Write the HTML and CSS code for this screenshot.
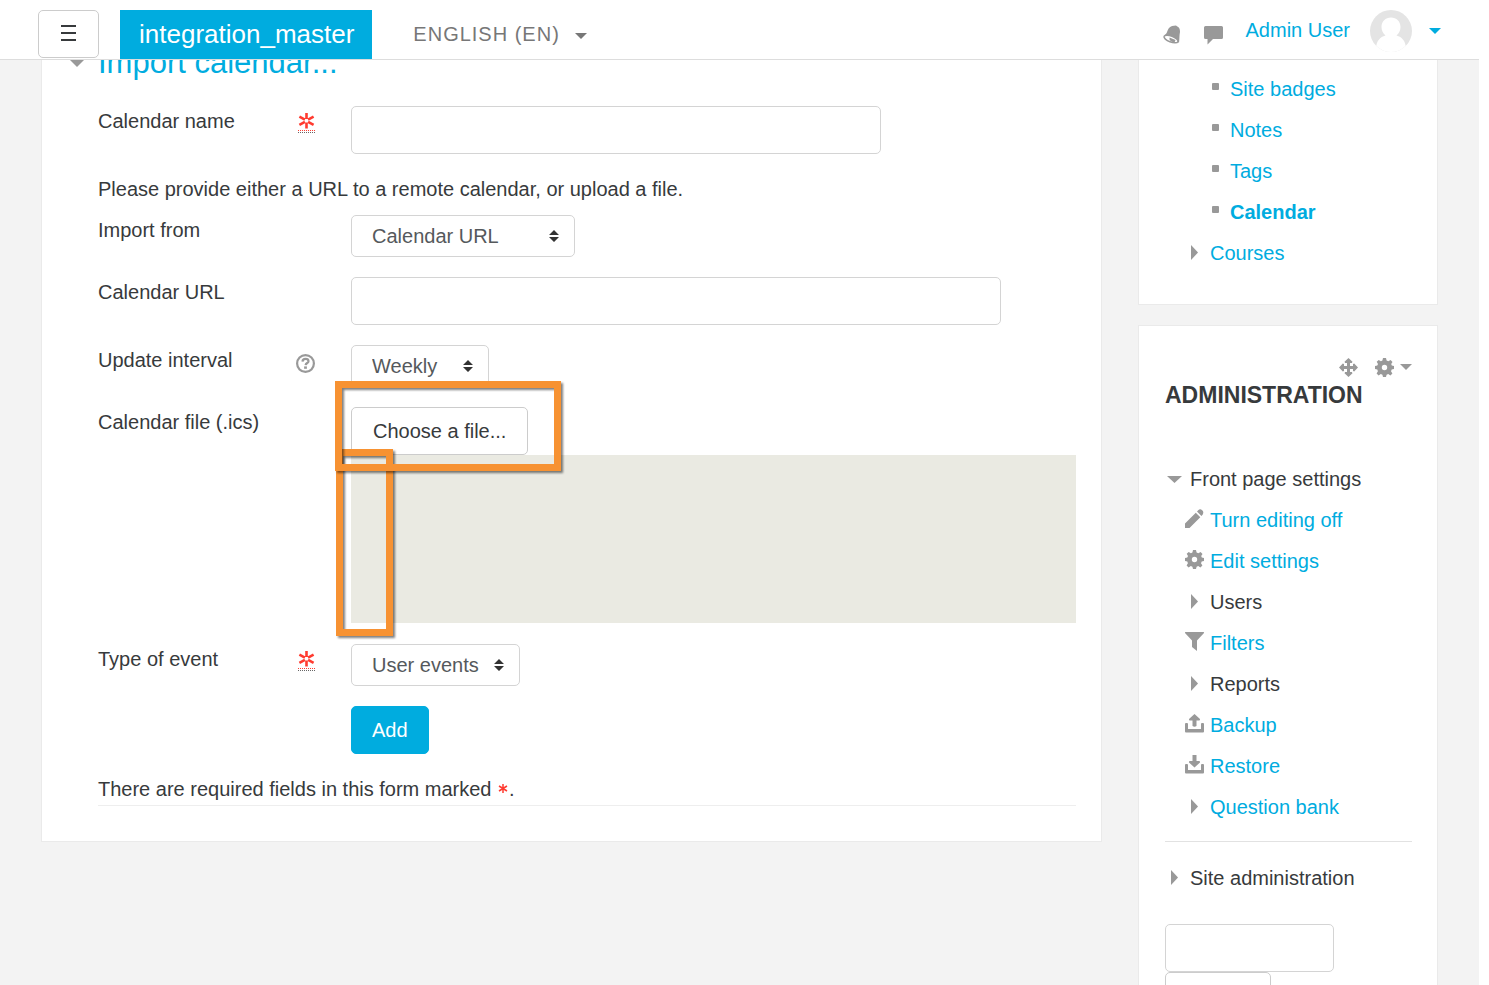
FILE: index.html
```html
<!DOCTYPE html>
<html lang="en">
<head>
    <meta charset="UTF-8">
    <meta name="viewport" content="width=device-width, initial-scale=1.0">
    <title>Import calendar</title>
    <link rel="stylesheet" href="styles.css">
</head>
<body>
    <!-- shared icons -->
    <svg class="sprite" aria-hidden="true">
        <symbol id="i-cog" viewBox="0 0 20 20">
            <path fill-rule="evenodd" d="M8 0h3l.6 2.500 1.700.8L15.600 2l1.900 1.900-1.300 2.200.6 1.500L19 8v3l-2.300.6-.7 1.600 1.400 2.200-2 2-2.200-1.300-1.600.6L11 19H8l-.6-2.300-1.600-.7-2.200 1.400-2-2 1.300-2.200-.6-1.600L0 11V8l2.300-.5.7-1.500-1.300-2.200 2-1.900 2.200 1.400 1.500-.7zM9.500 6.800a2.700 2.700 0 1 0 0 5.400 2.700 2.700 0 0 0 0-5.400z"/>
        </symbol>
        <symbol id="i-required" viewBox="0 0 17 17">
            <g stroke="currentColor" stroke-width="2.600">
                <path d="M8.500 0v6M8.500 9.500v6M1.400 3.700l5.500 3M10.100 8.800l5.500 3M15.600 3.700l-5.500 3M6.900 8.800l-5.500 3"/>
            </g>
        </symbol>
        <symbol id="i-square" viewBox="0 0 20 20"><rect x="7" y="5" width="7" height="7" rx="1"/></symbol>
        <symbol id="i-right" viewBox="0 0 20 20"><path d="M6 3v15l7-7.500z"/></symbol>
        <symbol id="i-down" viewBox="0 0 20 20"><path d="M2 8h15l-7.500 7z"/></symbol>
    </svg>

    <header class="navbar">
        <button class="btn menu-btn" type="button" aria-label="Side panel">
            <svg width="15" height="16" viewBox="0 0 15 16"><path d="M0 0h15v2H0zM0 7h15v2H0zM0 14h15v2H0z"/></svg>
        </button>
        <a class="brand" href="#">integration_master</a>
        <a class="lang" href="#">ENGLISH (EN)<span class="caret"></span></a>
        <div class="usernav">
            <button class="icon-btn" type="button" aria-label="Notifications">
                <svg width="20" height="20" viewBox="0 0 20 20">
                    <path d="M7 3C9 1 11 .6 14 .5l1 .8c2.500 1 3 3 3 5.700-.8 4-.3 6-1 11C14 14 8 11 2 10.500 6 8 4.800 5.500 7 3z"/>
                    <ellipse cx="9" cy="14" rx="7.400" ry="3" transform="rotate(21 9 14)" fill="#fff" stroke="#999" stroke-width="1.500"/>
                    <path d="M7.500 12.500l6 2.600-.8 2c-2.300.2-4.700-1-5.200-2.600z"/>
                </svg>
            </button>
            <button class="icon-btn" type="button" aria-label="Messages">
                <svg width="20" height="20" viewBox="0 0 20 20"><path d="M1.500 1h16q1.500 0 1.500 1.500v10q0 1.500-1.500 1.500H9L3.500 19.500V14h-2Q0 14 0 12.500v-10Q0 1 1.500 1z"/></svg>
            </button>
            <a class="user" href="#">
                <span>Admin User</span>
                <svg class="avatar" width="42" height="42" viewBox="0 0 42 42">
                    <defs><clipPath id="face"><circle cx="21" cy="21" r="21"/></clipPath></defs>
                    <g clip-path="url(#face)">
                        <path fill="#e4e4e4" d="M0 0h42v42H0z"/>
                        <path fill="#fff" d="M21 7.500c5.500 0 9.500 4 9.500 9.500 0 3.500-1.500 6.500-4 8.500C32 27 35.500 31 36 38v4H6v-4c.5-7 4-11 9.500-12.500-2.500-2-4-5-4-8.500 0-5.500 4-9.500 9.500-9.500z"/>
                    </g>
                </svg>
                <span class="caret"></span>
            </a>
        </div>
    </header>

    <div class="page">
        <main class="card main-card">
            <form class="mform">
                <h2 class="legend"><span class="twisty"></span><a href="#">Import calendar...</a></h2>

                <div class="row">
                    <div class="row-label">
                        <label for="name">Calendar name</label>
                        <abbr class="req" title="Required"><svg width="17" height="17"><use href="#i-required"/></svg></abbr>
                    </div>
                    <div class="row-field"><input class="text text-md" id="name" type="text"></div>
                </div>

                <p class="static">Please provide either a URL to a remote calendar, or upload a file.</p>

                <div class="row">
                    <div class="row-label"><label for="importfrom">Import from</label></div>
                    <div class="row-field">
                        <select id="importfrom">
                            <option>Calendar file (.ics)</option>
                            <option selected>Calendar URL</option>
                        </select>
                    </div>
                </div>

                <div class="row">
                    <div class="row-label"><label for="url">Calendar URL</label></div>
                    <div class="row-field"><input class="text text-lg" id="url" type="text"></div>
                </div>

                <div class="row">
                    <div class="row-label">
                        <label for="interval">Update interval</label>
                        <button class="help" type="button" aria-label="Help">
                            <svg width="19" height="19" viewBox="0 0 19 19">
                                <circle cx="9.500" cy="9.500" r="8.400" stroke-width="2.200"/>
                                <path d="M6.500 7.600c.1-1.800 1.300-2.700 3-2.700s3 .9 3 2.300c0 1.900-2.600 1.700-2.900 3.900" stroke-width="2.200"/>
                                <path d="M9.500 12.400v2.400" stroke-width="2.800"/>
                            </svg>
                        </button>
                    </div>
                    <div class="row-field">
                        <select id="interval">
                            <option>Never</option>
                            <option>Hourly</option>
                            <option>Daily</option>
                            <option selected>Weekly</option>
                            <option>Monthly</option>
                        </select>
                    </div>
                </div>

                <div class="row">
                    <div class="row-label"><label for="choose">Calendar file (.ics)</label></div>
                    <div class="row-field file-field">
                        <button class="btn" id="choose" type="button">Choose a file...</button>
                        <div class="dropzone"></div>
                        <div class="mark mark-zone"></div>
                        <div class="mark mark-button"></div>
                    </div>
                </div>

                <div class="row">
                    <div class="row-label">
                        <label for="eventtype">Type of event</label>
                        <abbr class="req" title="Required"><svg width="17" height="17"><use href="#i-required"/></svg></abbr>
                    </div>
                    <div class="row-field">
                        <select id="eventtype"><option>User events</option></select>
                    </div>
                </div>

                <div class="row">
                    <div class="row-label"></div>
                    <div class="row-field"><button class="btn btn-primary" type="submit">Add</button></div>
                </div>

                <p class="note">There are required fields in this form marked <svg class="star" width="12" height="12" viewBox="0 0 12 12"><path d="M6 0v9M2 2l8 5M10 2L2 7"/></svg>.</p>
            </form>
        </main>

        <aside class="side">
            <nav class="card nav-card">
                <ul class="tree">
                    <li>
                        <ul>
                            <li>
                                <ul>
                                    <li><svg class="icon"><use href="#i-square"/></svg><a href="#">Site badges</a></li>
                                    <li><svg class="icon"><use href="#i-square"/></svg><a href="#">Notes</a></li>
                                    <li><svg class="icon"><use href="#i-square"/></svg><a href="#">Tags</a></li>
                                    <li><svg class="icon"><use href="#i-square"/></svg><a class="active" href="#">Calendar</a></li>
                                </ul>
                            </li>
                            <li><svg class="icon"><use href="#i-right"/></svg><a href="#">Courses</a></li>
                        </ul>
                    </li>
                </ul>
            </nav>

            <section class="card admin-card">
                <div class="block-tools">
                    <button class="icon-btn" type="button" aria-label="Move block">
                        <svg width="20" height="20" viewBox="0 0 20 20"><path d="M9.500 1l4 3.800-.6 1.200H11v3h3V7.100l1.200-.6 3.800 4-3.800 4-1.200-.6V12h-3v3h1.900l.6 1.200-4 3.800-4-3.800.6-1.200H8v-3H5v1.900l-1.200.6-3.800-4 3.800-4 1.200.6V9h3V6H6.100l-.6-1.200z"/></svg>
                    </button>
                    <button class="icon-btn" type="button" aria-label="Block actions">
                        <svg width="20" height="20"><use href="#i-cog" y="1"/></svg><span class="caret"></span>
                    </button>
                </div>
                <h3>ADMINISTRATION</h3>
                <ul class="tree">
                    <li><svg class="icon"><use href="#i-down"/></svg><span>Front page settings</span>
                        <ul>
                            <li><svg class="icon" viewBox="0 0 20 20"><path d="M0 14.500L10.800 3.700l4.500 4.500L4.500 19H0zM12 2.500l1.200-1.300q2-1.700 4 .1t.4 4.400l-1.200 1.300z"/></svg><a href="#">Turn editing off</a></li>
                            <li><svg class="icon"><use href="#i-cog"/></svg><a href="#">Edit settings</a></li>
                            <li><svg class="icon"><use href="#i-right"/></svg><span>Users</span></li>
                            <li><svg class="icon" viewBox="0 0 20 20"><path d="M.5 0h18q.8 0 .5 1L12 8.500V19l-5-4V8.500L0 1q-.3-1 .5-1z"/></svg><a href="#">Filters</a></li>
                            <li><svg class="icon"><use href="#i-right"/></svg><span>Reports</span></li>
                            <li><svg class="icon" viewBox="0 0 20 20"><path d="M1 9h1q1 0 1 1v5h13v-5q0-1 1-1h1q1 0 1 1v7.500q0 1-1 1H1q-1 0-1-1V10q0-1 1-1zM9.500 0L15 5q.3 1.500-1 1.500h-2.500v5.500q-2 1.500-4 0V6.500H5Q3.700 6.500 4 5z"/></svg><a href="#">Backup</a></li>
                            <li><svg class="icon" viewBox="0 0 20 20"><path d="M1 9h1q1 0 1 1v5h13v-5q0-1 1-1h1q1 0 1 1v7.500q0 1-1 1H1q-1 0-1-1V10q0-1 1-1zM9.500 12.500L4 7.500Q3.700 6 5 6h2.500V0h4v6H14q1.300 0 1 1.500z"/></svg><a href="#">Restore</a></li>
                            <li><svg class="icon"><use href="#i-right"/></svg><a href="#">Question bank</a></li>
                        </ul>
                    </li>
                </ul>
                <hr>
                <ul class="tree">
                    <li><svg class="icon"><use href="#i-right"/></svg><span>Site administration</span></li>
                </ul>
                <form class="search">
                    <input class="text" type="text" aria-label="Search in settings">
                    <button class="btn" type="submit" aria-label="Search"></button>
                </form>
            </section>
        </aside>
    </div>
</body>
</html>
```
FILE: styles.css
```css
* {
    box-sizing: border-box;
}
html {
    background-color: #fff;
}
body {
    font-family: "Liberation Sans", Arial, sans-serif;
    font-size: 20px;
    line-height: 30px;
    color: #373a3c;
    height: 100vh;
    margin: 0 10px 0 0;
    padding-top: 40px;
    overflow: hidden;
    background-color: #f3f3f3;
}
a {
    color: #00acdf;
    text-decoration: none;
}
button, input, select {
    font: inherit;
    color: inherit;
}
button {
    cursor: pointer;
}
.sprite {
    display: none;
}
svg {
    fill: currentColor;
    flex-shrink: 0;
}

/* top bar */
.navbar {
    position: fixed;
    top: 0;
    left: 0;
    right: 10px;
    z-index: 10;
    height: 60px;
    padding: 10px 38px 0;
    display: flex;
    align-items: flex-start;
    background-color: #fff;
    border-bottom: 1px solid #ddd;
}
.btn {
    height: 48px;
    padding: 0 21px;
    background-color: #fff;
    border: 1px solid #ccc;
    border-radius: 5px;
}
.menu-btn {
    width: 61px;
    padding: 0;
}
.brand {
    margin-left: 21px;
    padding: 0 18px 0 19px;
    line-height: 49px;
    font-size: 26px;
    color: #fff;
    background-color: #00acdf;
}
.lang {
    margin-left: 41px;
    line-height: 49px;
    letter-spacing: 1px;
    color: #777;
}
.caret {
    display: inline-block;
    border: 6px solid transparent;
    border-top-color: currentColor;
    border-bottom: 0;
    vertical-align: middle;
}
.lang .caret {
    margin-left: 15px;
}
.usernav {
    display: flex;
    align-items: center;
    margin-left: auto;
    height: 42px;
}
.icon-btn {
    display: flex;
    align-items: center;
    padding: 0;
    border: 0;
    background: none;
    color: #999;
}
.usernav .icon-btn {
    margin-right: 22px;
    padding-top: 8px;
}
.user {
    display: flex;
    align-items: center;
    line-height: 28px;
}
.user span:first-child {
    padding-bottom: 2px;
}
.avatar {
    margin: 0 17px 0 20px;
}

/* columns */
.page {
    display: grid;
    grid-template-columns: minmax(0, 1fr) 300px;
    gap: 36px;
    align-items: start;
    padding: 0 41px;
}
.card {
    background-color: #fff;
    border: 1px solid #eaeaea;
}
.main-card {
    padding: 0 25px 35px;
}

/* form */
.mform {
    padding-left: 31px;
}
.legend {
    position: relative;
    margin: 0 0 22px;
    font-size: 31px;
    line-height: 43px;
    font-weight: normal;
}
.twisty {
    position: absolute;
    left: -28px;
    top: 19px;
    border: 7px solid transparent;
    border-top-color: #999;
    border-bottom: 0;
}
.row {
    display: grid;
    grid-template-columns: 253px minmax(0, 1fr);
    margin-bottom: 20px;
}
.row-label {
    display: flex;
    justify-content: space-between;
    align-items: flex-start;
    padding-right: 36px;
}
.row-field {
    display: flex;
    align-items: flex-start;
}
.text {
    height: 48px;
    padding: 0 20px;
    border: 1px solid #d4d4d4;
    border-radius: 5px;
    background-color: #fff;
}
.text-md {
    width: 530px;
}
.text-lg {
    width: 650px;
}
select {
    appearance: none;
    min-width: 138px;
    height: 42px;
    padding: 0 40px 0 20px;
    color: #55595c;
    border: 1px solid #d4d4d4;
    border-radius: 5px;
    background: #fff url("data:image/svg+xml,%3Csvg xmlns='http://www.w3.org/2000/svg' width='10' height='12' viewBox='0 0 10 12'%3E%3Cpath fill='%23333' d='M0 5l5-5 5 5zM0 7h10l-5 5z'/%3E%3C/svg%3E") no-repeat right 15px center;
}
.req {
    display: flex;
    margin-top: 7px;
    color: #ff3b30;
    border-bottom: 1px dotted #666;
    text-decoration: none;
}
.req svg {
    box-sizing: content-box;
    margin-bottom: 1px;
    border-bottom: 1px dotted #ff3b30;
}
.help {
    display: flex;
    margin-top: 9px;
    padding: 0;
    border: 0;
    background: none;
}
.help svg {
    fill: none;
    stroke: #999;
}
.static {
    margin: 0 0 11px;
}
.file-field {
    position: relative;
    flex-direction: column;
}
.dropzone {
    align-self: stretch;
    height: 168px;
    margin-bottom: 1px;
    background-color: #eaeae2;
}

/* highlights drawn over the file picker */
.mark {
    position: absolute;
    border: 7px solid #f79232;
    filter: drop-shadow(2px 2px 1px rgba(0, 0, 0, 0.5));
}
.mark-button {
    left: -16px;
    top: -26px;
    width: 226px;
    height: 90px;
}
.mark-zone {
    left: -15px;
    top: 42px;
    width: 57px;
    height: 187px;
}
.btn-primary {
    padding: 0 20px;
    color: #fff;
    background-color: #00acdf;
    border-color: #00acdf;
}
.note {
    margin: 0;
    padding-bottom: 1px;
    border-bottom: 1px solid #eee;
}
.star {
    stroke: #ff3b30;
    stroke-width: 1.5;
}

/* side blocks */
.side {
    display: grid;
    gap: 20px;
}
.nav-card {
    padding: 28px 26px 30px;
}
.admin-card {
    padding: 28px 25px 26px 26px;
}
.block-tools {
    display: flex;
    justify-content: flex-end;
    gap: 16px;
    height: 26px;
}
.block-tools .caret {
    margin-left: 5px;
}
h3 {
    margin: 0 0 49px;
    font-size: 23px;
    line-height: 30px;
}
.tree, .tree ul {
    list-style: none;
    margin: 0;
    padding: 0;
}
.tree ul {
    padding-left: 20px;
}
.tree li {
    line-height: 41px;
}
.icon {
    width: 20px;
    height: 20px;
    margin-right: 5px;
    color: #999;
    vertical-align: -2px;
}
.active {
    font-weight: bold;
}
hr {
    margin: 13px 0 16px;
    border: 0;
    border-top: 1px solid #e2e2e2;
}
.search {
    display: flex;
    flex-direction: column;
    align-items: flex-start;
    margin-top: 25px;
}
.search .text {
    width: 169px;
}
.search .btn {
    width: 106px;
}
```
